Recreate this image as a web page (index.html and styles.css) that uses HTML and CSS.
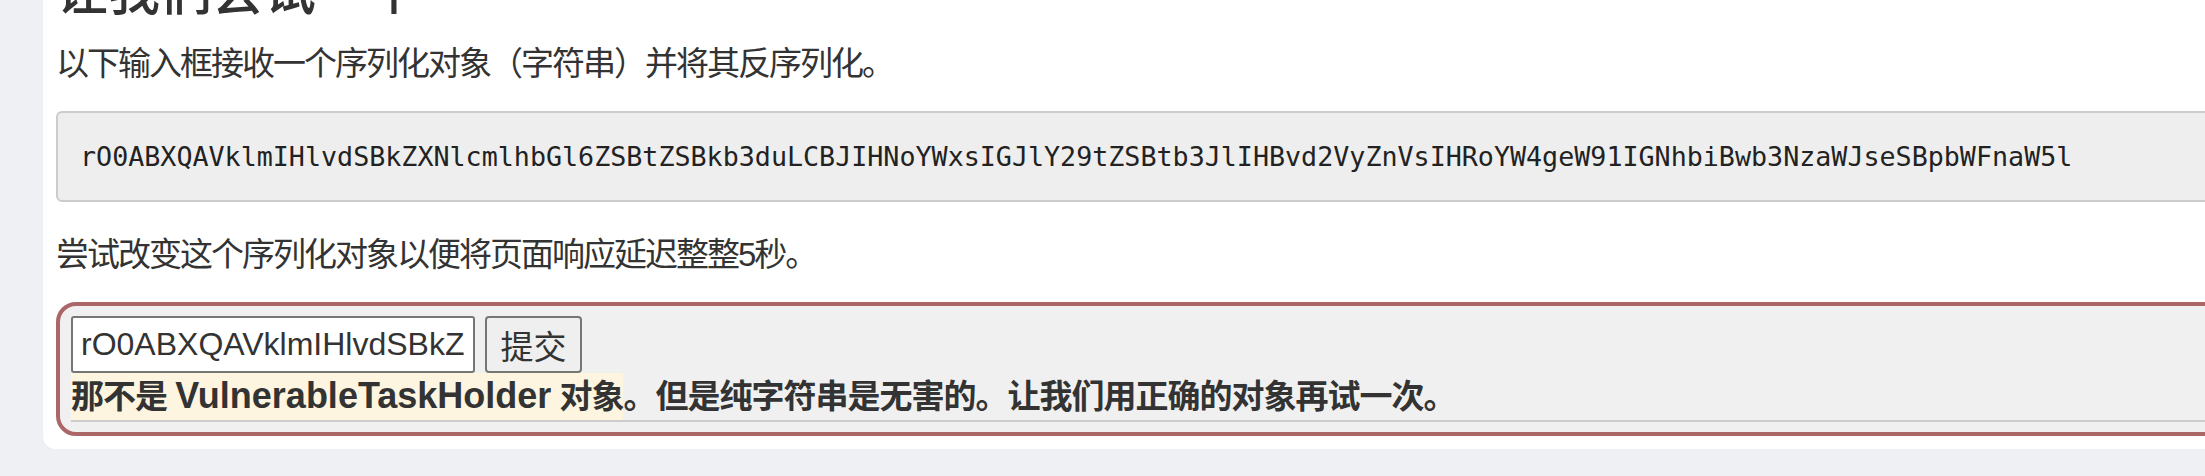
FILE: index.html
```html
<!DOCTYPE html>
<html lang="zh-CN">
<head>
<meta charset="utf-8">
<title>让我们尝试一个</title>
<link rel="stylesheet" href="styles.css">
</head>
<body>
<div class="card">
  <h2 class="title">让我们尝试一个</h2>
  <p class="lead">以下输入框接收一个序列化对象（字符串）并将其反序列化。</p>
  <pre class="code">rO0ABXQAVklmIHlvdSBkZXNlcmlhbGl6ZSBtZSBkb3duLCBJIHNoYWxsIGJlY29tZSBtb3JlIHBvd2VyZnVsIHRoYW4geW91IGNhbiBwb3NzaWJseSBpbWFnaW5l</pre>
  <p class="lead">尝试改变这个序列化对象以便将页面响应延迟整整5秒。</p>
  <form class="attack">
    <div class="row">
      <input class="field" type="text" value="rO0ABXQAVklmIHlvdSBkZXNlcmlhbGl6ZSBtZSBkb3duLCBJIHNoYWxsIGJlY29tZSBtb3JlIHBvd2VyZnVsIHRoYW4geW91IGNhbiBwb3NzaWJseSBpbWFnaW5l">
      <button class="submit" type="button">提交</button>
    </div>
    <div class="output"><span class="hl">那不是 <span class="latin">VulnerableTaskHolder</span> 对象</span>。但是纯字符串是无害的。让我们用正确的对象再试一次。</div>
  </form>
</div>
</body>
</html>
```

FILE: styles.css
```css
html, body {
  margin: 0;
  padding: 0;
  overflow: hidden;
  background: #eff0f4;
}

body {
  font-family: "Liberation Sans", "Noto Sans CJK SC", sans-serif;
  color: #333333;
}

.card {
  background: #ffffff;
  margin: -42px -80px 0 43px;
  padding: 0 0 13px 13px;
  border-radius: 0 0 12px 12px;
  box-shadow: 0 1px 2px rgba(0, 0, 0, 0.04);
}

.title {
  margin: 0;
  font-family: "Noto Sans CJK SC", sans-serif;
  font-size: 52px;
  line-height: 60px;
  font-weight: 500;
  color: #333333;
}

.lead {
  margin: 24px 0 0;
  font-size: 33px;
  letter-spacing: -2px;
  line-height: 44px;
}

.code {
  margin: 25px 0 0;
  padding: 25px 22px;
  background: #eeeeee;
  border: 2px solid #cccccc;
  border-radius: 6px;
  font-family: "DejaVu Sans Mono", monospace;
  font-size: 26.7px;
  line-height: 37px;
  color: #222222;
  white-space: pre;
  overflow: hidden;
}

.code + .lead {
  margin-top: 31px;
}

.attack {
  margin: 25px 0 0;
  background: #f0f0f0;
  border: 4px solid #ab6767;
  border-radius: 20px;
  padding: 10px 10px 10px 11px;
}

.row {
  display: flex;
  gap: 10px;
}

.field {
  box-sizing: border-box;
  width: 404px;
  height: 57px;
  margin: 0;
  padding: 0 8px;
  border: 2px solid #767676;
  border-radius: 3px;
  background: #ffffff;
  font-family: "Liberation Sans", "Noto Sans CJK SC", sans-serif;
  font-size: 32px;
  color: #333333;
}

.submit {
  box-sizing: border-box;
  width: 97px;
  height: 57px;
  margin: 0;
  padding: 0;
  border: 2px solid #767676;
  border-radius: 4px;
  background: #efefef;
  font-family: "Noto Sans CJK SC", sans-serif;
  font-size: 33px;
  color: #333333;
}

.output {
  font-size: 33px;
  letter-spacing: -1px;
  font-weight: bold;
  line-height: 46px;
  border-bottom: 2px solid #cccccc;
}

.hl {
  display: inline-block;
  background: #fdf5df;
}

.latin {
  font-size: 36px;
  letter-spacing: 0;
}
```
